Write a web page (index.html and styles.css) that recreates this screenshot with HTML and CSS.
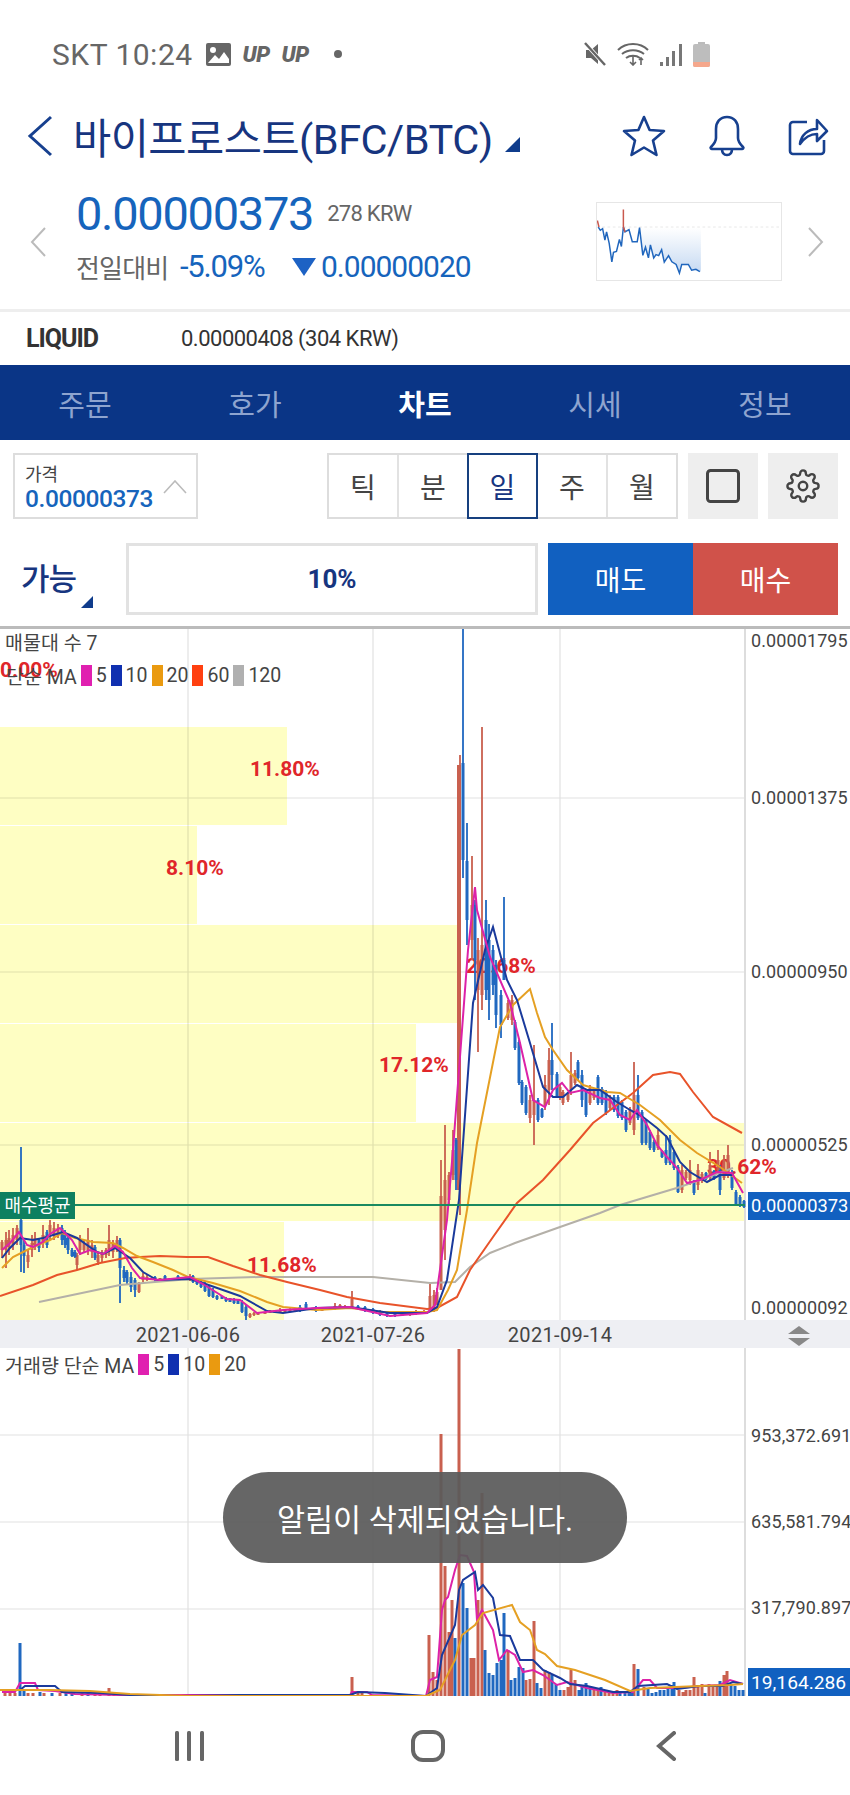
FILE: index.html
```html
<!DOCTYPE html>
<html lang="ko">
    <head>
        <title>바이프로스트 차트</title>
        <meta name="viewport" content="width=device-width, initial-scale=1.0">
        <link rel="stylesheet" href="styles.css">
    </head>
    <body>
        <!-- Status bar -->
        <div class="status">
            <span class="status-text">SKT 10:24</span>
            <svg class="status-img" width="25" height="23" viewBox="0 0 25 23">
                <rect width="25" height="23" rx="2" fill="#666"/>
                <circle cx="7" cy="7" r="3" fill="#fff"/>
                <path d="M2 20l7-8 4 4 5-7 5 7v4H2z" fill="#fff"/>
            </svg>
            <span class="status-up">UP</span>
            <span class="status-up">UP</span>
            <span class="status-dot"></span>
            <div class="status-right">
                <svg width="24" height="24" viewBox="0 0 24 24">
                    <path d="M3 8h5l7-6v20l-7-6H3z" fill="#666"/>
                    <path d="M2 1l20 22" stroke="#fff" stroke-width="4"/>
                    <path d="M2 1l20 22" stroke="#666" stroke-width="2.4"/>
                </svg>
                <svg width="33" height="24" viewBox="0 0 33 24" fill="none" stroke="#666" stroke-width="2">
                    <path d="M1 8c8-8 22-8 30 0"/>
                    <path d="M5 12c6-5 16-5 22 0"/>
                    <path d="M9 16c4-3 10-3 14 0"/>
                    <path d="M16 14v9M13 20l3 3 3-3" stroke-width="1.6"/>
                    <path d="M24 23v-7M22 18l2-2 2 2" stroke-width="1.6"/>
                </svg>
                <svg width="23" height="23" viewBox="0 0 23 23" fill="#777">
                    <rect x="0" y="19" width="3" height="4"/>
                    <rect x="6" y="14" width="3" height="9"/>
                    <rect x="12" y="8" width="3" height="15"/>
                    <rect x="19" y="1" width="3" height="22"/>
                </svg>
                <svg width="17" height="25" viewBox="0 0 17 25">
                    <rect x="5" y="0" width="7" height="3" fill="#bbb"/>
                    <rect x="0" y="2" width="17" height="23" rx="2" fill="#bdbdbd"/>
                    <path d="M0 20h17v3a2 2 0 0 1-2 2H2a2 2 0 0 1-2-2z" fill="#f5a78c"/>
                </svg>
            </div>
        </div>

        <!-- Title -->
        <div class="title-bar">
            <svg class="back-icon" width="26" height="42" viewBox="0 0 26 42">
                <path d="M24 2L3 21l21 19" fill="none" stroke="#17408f" stroke-width="3"/>
            </svg>
            <div class="title">바이프로스트(BFC/BTC)</div>
            <div class="corner-mark title-mark"></div>
            <div class="title-icons">
                <svg width="44" height="42" viewBox="0 0 44 42" fill="none" stroke="#17408f" stroke-width="2.6" stroke-linejoin="round">
                    <path d="M22 2l5.6 13L42 16l-11 9.500L34.500 40 22 32.500 9.500 40 13 25.500 2 16l14.400-1z"/>
                </svg>
                <svg width="40" height="42" viewBox="0 0 38 42" fill="none" stroke="#17408f" stroke-width="2.6" stroke-linejoin="round">
                    <path d="M19 2C12 2 8 7 8 14v9c0 4-2 6-5 9-1 1 0 2 1 2h30c1 0 2-1 1-2-3-3-5-5-5-9v-9c0-7-4-12-11-12z"/>
                    <path d="M14 34c0 4 2 6 5 6s5-2 5-6"/>
                </svg>
                <svg width="41" height="40" viewBox="0 0 41 40" fill="none" stroke="#17408f" stroke-width="2.6" stroke-linejoin="round">
                    <path d="M19 6H5a3 3 0 0 0-3 3v26a3 3 0 0 0 3 3h28a3 3 0 0 0 3-3V24"/>
                    <path d="M12 28c1-9 8-15 17-15V4l10 11-10 10v-7c-7 0-12 3-17 10z"/>
                </svg>
            </div>
        </div>

        <!-- Price summary -->
        <div class="summary">
            <svg class="pager" width="16" height="30" viewBox="0 0 16 30">
                <path d="M15 1L2 15l13 14" fill="none" stroke="#bbb" stroke-width="2"/>
            </svg>
            <div class="summary-main">
                <div class="price-row">
                    <span class="price">0.00000373</span>
                    <span class="price-krw">278 KRW</span>
                </div>
                <div class="change-row">
                    <span class="change-label">전일대비</span>
                    <span class="change-pct">-5.09%</span>
                    <span class="change-arrow"></span>
                    <span class="change-value">0.00000020</span>
                </div>
            </div>
            <svg class="mini-chart" width="186" height="79" viewBox="18 36 558 237" preserveAspectRatio="none">
                <defs>
                    <linearGradient id="mini-fill" x1="0" y1="0" x2="0" y2="1">
                        <stop offset="0" stop-color="#ffffff"/>
                        <stop offset="1" stop-color="#c5d9f2"/>
                    </linearGradient>
                </defs>
                <path d="M150 112L157 197 165 172 174 205 180 165 190 205 197 195 205 198 214 180 222 218 235 198 245 217 258 225 268 252 275 225 295 225 305 243 318 240 333 247V112z" fill="url(#mini-fill)"/>
                <path d="M18 110H576" stroke="#e8e8e8" stroke-width="3" stroke-dasharray="8 8"/>
                <path d="M22 110L28 120 35 115 42 150 47 125 55 160 63 217 68 188 77 185 86 148 92 170 98 110 103 125 115 118 125 155 140 155 147 112 157 197 165 172 174 205 180 165 190 205 197 195 205 198 214 180 222 218 235 198 245 217 258 225 268 252 275 225 295 225 305 243 318 240 330 247" fill="none" stroke="#2066bd" stroke-width="4.500"/>
                <path d="M19 90L24 110M98 56V110L103 125" fill="none" stroke="#c9584e" stroke-width="4.500"/>
            </svg>
            <svg class="pager" width="16" height="30" viewBox="0 0 16 30">
                <path d="M1 1l13 14L1 29" fill="none" stroke="#bbb" stroke-width="2"/>
            </svg>
        </div>

        <div class="market">
            <div class="market-name">LIQUID</div>
            <div class="market-value">0.00000408 (304 KRW)</div>
        </div>

        <!-- Tabs -->
        <div class="tabs">
            <div class="tab">주문</div>
            <div class="tab">호가</div>
            <div class="tab active">차트</div>
            <div class="tab">시세</div>
            <div class="tab">정보</div>
        </div>

        <!-- Chart controls -->
        <div class="toolbar">
            <div class="price-box">
                <div class="price-box-label">가격</div>
                <div class="price-box-value">0.00000373</div>
                <svg class="price-box-caret" width="24" height="14" viewBox="0 0 24 14">
                    <path d="M1 13L12 1l11 12" fill="none" stroke="#bbb" stroke-width="1.600"/>
                </svg>
            </div>
            <div class="periods">
                <div class="period">틱</div>
                <div class="period">분</div>
                <div class="period selected">일</div>
                <div class="period">주</div>
                <div class="period">월</div>
            </div>
            <div class="tool-btn">
                <svg width="34" height="34" viewBox="0 0 34 34">
                    <rect x="1.500" y="1.500" width="31" height="31" rx="3" fill="none" stroke="#444" stroke-width="3"/>
                </svg>
            </div>
            <div class="tool-btn">
                <svg width="34" height="34" viewBox="0 0 24 24" fill="none" stroke="#444" stroke-width="1.700">
                    <circle cx="12" cy="12" r="3"/>
                    <path d="M19.400 15a1.650 1.650 0 0 0 .33 1.820l.06.06a2 2 0 0 1 0 2.830 2 2 0 0 1-2.830 0l-.06-.06a1.650 1.650 0 0 0-1.820-.33 1.650 1.650 0 0 0-1 1.510V21a2 2 0 0 1-2 2 2 2 0 0 1-2-2v-.09A1.650 1.650 0 0 0 9 19.400a1.650 1.650 0 0 0-1.820.33l-.06.06a2 2 0 0 1-2.830 0 2 2 0 0 1 0-2.830l.06-.06a1.650 1.650 0 0 0 .33-1.820 1.650 1.650 0 0 0-1.510-1H3a2 2 0 0 1-2-2 2 2 0 0 1 2-2h.09A1.650 1.650 0 0 0 4.600 9a1.650 1.650 0 0 0-.33-1.820l-.06-.06a2 2 0 0 1 0-2.830 2 2 0 0 1 2.830 0l.06.06a1.650 1.650 0 0 0 1.820.33H9a1.650 1.650 0 0 0 1-1.510V3a2 2 0 0 1 2-2 2 2 0 0 1 2 2v.09a1.650 1.650 0 0 0 1 1.510 1.650 1.650 0 0 0 1.820-.33l.06-.06a2 2 0 0 1 2.830 0 2 2 0 0 1 0 2.830l-.06.06a1.650 1.650 0 0 0-.33 1.820V9a1.650 1.650 0 0 0 1.510 1H21a2 2 0 0 1 2 2 2 2 0 0 1-2 2h-.09a1.650 1.650 0 0 0-1.510 1z"/>
                </svg>
            </div>
        </div>

        <div class="order-row">
            <div class="order-type">
                <span>가능</span>
                <div class="corner-mark order-mark"></div>
            </div>
            <div class="order-pct">10%</div>
            <div class="order-buttons">
                <div class="order-btn sell">매도</div>
                <div class="order-btn buy">매수</div>
            </div>
        </div>

        <!-- Price chart -->
        <div class="chart price-chart">
            <svg class="chart-svg" width="850" height="722" viewBox="0 626 850 722">
                <g fill="#fefec3">
                    <rect x="0" y="727" width="287" height="98"/>
                    <rect x="0" y="826" width="197" height="98"/>
                    <rect x="0" y="925" width="461" height="98"/>
                    <rect x="0" y="1024" width="416" height="98"/>
                    <rect x="0" y="1123" width="745" height="98"/>
                    <rect x="0" y="1222" width="284" height="98"/>
                </g>
                <path class="grid" d="M188 626V1320M373 626V1320M560 626V1320M0 798H745M0 972H745M0 1145H745"/>
                <path class="axis-line" d="M745 626V1320"/>

                <g class="vp-label">
                    <text x="0" y="677">0.00%</text>
                    <text x="250" y="776">11.80%</text>
                    <text x="166" y="875">8.10%</text>
                    <text x="466" y="973">20.68%</text>
                    <text x="379" y="1072">17.12%</text>
                    <text x="707" y="1174">30.62%</text>
                    <text x="247" y="1272">11.68%</text>
                </g>

                <!-- candles: wicks then bodies -->
                <path class="wick up" d="M2 1240V1258M6 1232V1268M9 1230V1255M13 1228V1250M17 1225V1245M28 1250V1268M32 1235V1257M35 1232V1250M43 1225V1248M50 1220V1240M54 1222V1240M58 1224V1238M77 1253V1270M80 1235V1255M84 1240V1252M88 1228V1255M92 1240V1258M98 1252V1265M102 1250V1262M106 1248V1258M109 1225V1256M113 1240V1258M117 1236V1252M139 1282V1293M143 1273V1282M147 1275V1281M190 1274V1281M250 1313V1318M254 1312V1316M270 1310V1313M280 1308V1313M290 1308V1312M335 1303V1310M340 1304V1308M345 1305V1308M352 1291V1307M410 1311V1316M416 1310V1315M424 1310V1314M430 1284V1312M434 1290V1312M437 1288V1305M441 1160V1290M445 1125V1260M449 1172V1205M453 1130V1180M460 755V1215M472 856V960M478 938V1052M482 727V1010M508 1000V1020M512 995V1025M530 1095V1123M534 1045V1145M545 1075V1110M549 1048V1105M560 1085V1100M563 1090V1105M568 1092V1102M571 1052V1095M575 1070V1085M590 1085V1105M594 1088V1100M610 1095V1110M630 1107V1125M634 1062V1135M658 1130V1150M682 1165V1193M686 1170V1180M690 1160V1185M698 1164V1190M702 1172V1183M710 1152V1180M718 1150V1172M724 1155V1180M728 1145V1178"/>
                <path class="wick down" d="M21 1147V1272M24 1240V1273M39 1238V1252M47 1230V1248M62 1225V1245M65 1230V1248M68 1236V1254M72 1248V1257M75 1250V1258M95 1245V1260M120 1238V1303M124 1266V1282M127 1270V1285M131 1272V1292M135 1278V1297M155 1276V1282M165 1275V1281M178 1275V1281M193 1275V1283M197 1278V1285M201 1280V1288M205 1282V1292M209 1285V1297M213 1288V1298M217 1295V1300M226 1297V1302M234 1298V1304M242 1300V1313M246 1305V1321M300 1305V1312M306 1302V1310M316 1306V1312M358 1305V1309M365 1306V1312M373 1308V1314M380 1310V1316M387 1312V1317M395 1313V1317M456 1138V1190M463 626V878M467 823V945M475 900V1000M486 900V1000M489 924V1020M493 945V995M496 960V1028M501 990V1038M504 897V980M515 1020V1050M519 1040V1085M522 1080V1105M526 1085V1115M538 1098V1122M542 1108V1118M552 1023V1090M557 1072V1098M578 1060V1080M582 1070V1107M586 1090V1117M598 1075V1105M602 1087V1105M606 1090V1115M614 1095V1112M618 1095V1118M622 1100V1120M626 1110V1132M638 1075V1120M642 1110V1145M646 1120V1145M650 1130V1150M654 1140V1152M662 1150V1158M666 1135V1165M670 1135V1165M674 1150V1170M678 1165V1193M694 1180V1195M706 1172V1180M714 1170V1180M720 1165V1195M732 1170V1190M736 1190V1205M740 1195V1207M744 1200V1208"/>
                <path class="body up" d="M2 1242V1250M6 1240V1250M9 1238V1247M13 1235V1245M17 1228V1240M28 1255V1262M32 1243V1250M35 1238V1245M43 1235V1242M50 1225V1232M54 1228V1236M58 1228V1235M77 1255V1265M80 1240V1250M84 1243V1250M88 1240V1250M92 1245V1252M98 1255V1262M102 1253V1258M106 1250V1255M109 1240V1250M113 1243V1252M117 1240V1248M139 1284V1292M143 1276V1280M147 1277V1280M151 1278V1280M160 1278V1280M170 1278V1280M183 1277V1279M190 1276V1279M250 1314V1317M254 1313V1315M258 1313V1315M265 1312V1314M270 1311V1313M275 1310V1313M280 1310V1312M285 1310V1312M290 1309V1312M295 1309V1311M322 1309V1311M330 1308V1310M335 1306V1309M340 1305V1308M345 1306V1308M352 1299V1307M402 1314V1316M410 1312V1315M416 1311V1314M424 1311V1313M430 1296V1310M434 1295V1310M437 1292V1304M441 1196V1290M445 1180V1230M449 1175V1200M453 1150V1175M472 905V940M478 950V990M482 945V995M508 1003V1018M512 1000V1020M530 1100V1118M534 1100V1115M545 1085V1105M549 1060V1090M560 1087V1098M563 1092V1103M568 1094V1100M571 1075V1090M575 1073V1083M590 1088V1103M594 1090V1098M610 1097V1108M630 1110V1123M634 1095V1130M658 1135V1148M682 1170V1190M686 1172V1178M690 1170V1180M698 1170V1185M702 1174V1181M710 1165V1178M718 1160V1170M724 1160V1178M728 1155V1176"/>
                <path class="body thick up" d="M459 765V1190"/>
                <path class="body down" d="M21 1220V1245M24 1245V1256M39 1240V1248M47 1232V1245M62 1228V1240M65 1233V1245M68 1238V1250M72 1250V1256M75 1252V1257M95 1247V1258M120 1240V1268M124 1270V1278M127 1272V1282M131 1277V1287M135 1280V1290M155 1277V1280M165 1276V1279M178 1276V1279M193 1276V1282M197 1280V1284M201 1282V1287M205 1284V1291M209 1287V1296M213 1290V1297M217 1296V1299M222 1296V1299M226 1298V1301M230 1298V1302M234 1299V1303M238 1299V1304M242 1302V1312M246 1307V1316M300 1307V1311M306 1304V1308M316 1307V1311M358 1306V1308M365 1307V1311M373 1309V1313M380 1311V1315M387 1313V1316M395 1314V1316M456 1140V1180M463 763V860M467 861V920M475 905V960M486 920V990M489 940V1000M493 950V985M496 965V1015M501 995V1025M504 960V980M515 1022V1048M519 1042V1083M522 1082V1103M526 1087V1113M538 1100V1120M542 1109V1117M552 1060V1075M557 1074V1096M578 1062V1078M582 1075V1100M586 1092V1115M598 1077V1103M602 1089V1103M606 1092V1113M614 1097V1110M618 1097V1116M622 1102V1118M626 1112V1130M638 1095V1118M642 1112V1143M646 1122V1143M650 1132V1148M654 1142V1150M662 1151V1157M666 1150V1163M670 1140V1163M674 1152V1168M678 1167V1192M694 1182V1193M706 1173V1179M714 1171V1179M720 1170V1190M732 1172V1188M736 1192V1204M740 1197V1206M744 1201V1207"/>

                <!-- moving averages -->
                <polyline class="ma ma120" points="39,1302 120,1285 190,1279 260,1277 373,1277 430,1283 455,1282 470,1267 490,1253 515,1243 560,1227 600,1213 620,1205 680,1187 733,1168"/>
                <polyline class="ma ma60" points="0,1296 33,1285 57,1275 77,1270 100,1263 125,1258 140,1257 160,1256 187,1257 208,1257 233,1266 260,1275 287,1282 320,1290 347,1297 380,1303 427,1309 437,1308 457,1297 470,1270 493,1237 517,1203 543,1180 570,1150 593,1123 633,1093 653,1075 670,1072 680,1074 693,1092 713,1117 742,1133"/>
                <polyline class="ma ma20" points="2,1268 13,1257 33,1247 50,1240 62,1233 75,1238 93,1242 113,1243 123,1248 137,1256 153,1262 173,1270 188,1277 213,1283 240,1291 267,1302 283,1307 317,1310 350,1308 383,1312 427,1312 437,1310 448,1290 457,1270 467,1210 477,1143 500,1027 513,1005 530,989 537,1013 545,1037 553,1050 567,1070 583,1085 607,1092 620,1093 640,1105 660,1120 680,1140 697,1153 720,1167 742,1183"/>
                <polyline class="ma ma10" points="2,1258 10,1248 20,1238 33,1240 43,1238 63,1232 77,1238 97,1252 103,1254 115,1248 130,1258 143,1272 157,1280 190,1279 200,1282 240,1296 267,1311 283,1313 317,1308 350,1307 390,1313 427,1313 437,1307 447,1280 459,1200 473,1003 485,950 493,927 507,980 517,1000 530,1043 543,1087 553,1097 563,1097 577,1085 587,1090 600,1090 610,1097 617,1102 630,1110 643,1117 657,1128 667,1137 680,1162 690,1172 707,1182 720,1175 733,1175"/>
                <polyline class="ma ma5" points="2,1250 10,1243 19,1232 27,1245 33,1247 43,1242 50,1234 60,1228 72,1240 80,1254 90,1250 103,1254 115,1246 123,1252 132,1268 140,1278 160,1280 190,1277 203,1284 227,1299 240,1300 257,1313 283,1310 317,1308 350,1307 390,1316 427,1313 435,1305 447,1220 453,1150 468,950 475,887 477,910 490,957 510,1003 520,1043 533,1100 545,1107 553,1090 562,1083 570,1093 583,1090 600,1098 610,1100 620,1115 630,1120 637,1110 647,1125 657,1145 667,1157 677,1168 687,1183 700,1180 717,1172 732,1173 743,1193"/>

                <path class="avg-line" d="M0 1205H745"/>
                <rect class="avg-badge" x="0" y="1192" width="75" height="27"/>
                <text class="avg-text" x="37.500" y="1212">매수평균</text>

                <g class="axis-text">
                    <text x="751" y="647">0.00001795</text>
                    <text x="751" y="804">0.00001375</text>
                    <text x="751" y="978">0.00000950</text>
                    <text x="751" y="1151">0.00000525</text>
                    <text x="751" y="1314">0.00000092</text>
                </g>
                <rect class="last-box" x="748" y="1192" width="102" height="28"/>
                <text class="last-text" x="751" y="1212">0.00000373</text>

                <!-- date strip -->
                <rect class="date-strip" x="0" y="1320" width="850" height="28"/>
                <g class="date-text">
                    <text x="188" y="1342">2021-06-06</text>
                    <text x="373" y="1342">2021-07-26</text>
                    <text x="560" y="1342">2021-09-14</text>
                </g>
                <path class="resizer" d="M799 1326l11 8h-22zM788 1338h22l-11 8z"/>
            </svg>
            <div class="legend-name price-legend-name">매물대 수 7</div>
            <div class="legend price-legend">
                <span>단순 MA</span>
                <i class="swatch c5"></i><span>5</span>
                <i class="swatch c10"></i><span>10</span>
                <i class="swatch c20"></i><span>20</span>
                <i class="swatch c60"></i><span>60</span>
                <i class="swatch c120"></i><span>120</span>
            </div>
        </div>

        <!-- Volume chart -->
        <div class="chart volume-chart">
            <svg class="chart-svg" width="850" height="348" viewBox="0 1348 850 348">
                <path class="grid" d="M188 1348V1696M373 1348V1696M560 1348V1696M0 1435H745M0 1522H745M0 1609H745"/>
                <path class="axis-line" d="M745 1348V1696"/>
                <path class="bar up" d="M5 1696V1693M10 1696V1693M15 1696V1693M28 1696V1693M33 1696V1693M44 1696V1693M60 1696V1693M82 1696V1693M95 1696V1693M100 1696V1693M109 1696V1688M114 1696V1692M352 1696V1677M358 1696V1693M362 1696V1693M429 1696V1635M433 1696V1672M437 1696V1680M441 1696V1434M445 1696V1566M449 1696V1632M452 1696V1600M459 1696V1349M471 1696V1658M474 1696V1658M478 1696V1600M482 1696V1493M508 1696V1650M526 1696V1680M530 1696V1679M534 1696V1621M545 1696V1670M549 1696V1672M564 1696V1690M568 1696V1687M571 1696V1670M575 1696V1680M594 1696V1688M598 1696V1690M605 1696V1692M609 1696V1692M613 1696V1692M617 1696V1690M634 1696V1664M644 1696V1687M679 1696V1690M683 1696V1692M686 1696V1690M690 1696V1690M694 1696V1677M698 1696V1685M702 1696V1684M709 1696V1684M713 1696V1686M717 1696V1686M724 1696V1675M727 1696V1671"/>
                <path class="bar down" d="M20 1696V1643M24 1696V1690M40 1696V1692M52 1696V1693M66 1696V1693M72 1696V1693M88 1696V1693M455 1696V1638M463 1696V1583M467 1696V1608M485 1696V1650M489 1696V1673M493 1696V1675M497 1696V1663M501 1696V1660M504 1696V1613M511 1696V1680M515 1696V1678M519 1696V1667M523 1696V1668M537 1696V1683M541 1696V1688M552 1696V1675M556 1696V1684M560 1696V1690M579 1696V1690M582 1696V1687M586 1696V1683M590 1696V1687M601 1696V1687M620 1696V1692M625 1696V1692M629 1696V1692M632 1696V1693M638 1696V1669M648 1696V1688M652 1696V1693M656 1696V1692M660 1696V1690M664 1696V1690M668 1696V1688M672 1696V1685M674 1696V1682M705 1696V1693M720 1696V1681M731 1696V1685M735 1696V1686M739 1696V1690M743 1696V1690"/>
                <polyline class="ma ma5" points="2,1692 15,1692 20,1683 35,1683 38,1690 55,1691 75,1694 120,1695 350,1695 352,1692 367,1692 372,1695 426,1696 430,1680 437,1677 442,1610 445,1600 448,1597 455,1570 460,1555 467,1556 474,1572 477,1620 482,1610 493,1630 499,1660 507,1650 515,1655 523,1672 533,1670 543,1675 557,1685 567,1682 587,1688 613,1693 633,1692 643,1680 650,1680 657,1688 680,1688 700,1686 720,1685 730,1680 743,1684"/>
                <polyline class="ma ma10" points="20,1690 25,1686 55,1686 62,1692 100,1693 130,1695 180,1696 240,1695 350,1695 358,1692 385,1693 426,1696 437,1688 442,1655 455,1625 459,1590 463,1580 475,1572 478,1590 483,1585 493,1598 500,1635 510,1636 520,1660 533,1660 543,1670 560,1678 570,1684 587,1686 613,1692 630,1692 638,1686 667,1684 677,1689 700,1686 723,1686 733,1682 743,1684"/>
                <polyline class="ma ma20" points="0,1690 15,1690 50,1690 90,1691 130,1694 190,1696 426,1696 440,1690 455,1660 462,1635 475,1625 483,1613 512,1605 520,1622 530,1630 537,1650 545,1654 557,1666 575,1670 605,1680 630,1691 650,1688 700,1686 730,1685 743,1684"/>
                <g class="axis-text">
                    <text x="751" y="1442">953,372.691</text>
                    <text x="751" y="1528">635,581.794</text>
                    <text x="751" y="1614">317,790.897</text>
                </g>
                <rect class="last-box" x="748" y="1668" width="102" height="28"/>
                <text class="last-text volume-last" x="751" y="1689">19,164.286</text>
            </svg>
            <div class="legend volume-legend">
                <span>거래량 단순 MA</span>
                <i class="swatch c5"></i><span>5</span>
                <i class="swatch c10"></i><span>10</span>
                <i class="swatch c20"></i><span>20</span>
            </div>
            <div class="toast">알림이 삭제되었습니다.</div>
        </div>

        <!-- Android navigation -->
        <div class="nav">
            <div class="nav-item">
                <svg width="30" height="30" viewBox="0 0 30 30" fill="#666">
                    <rect x="0" y="0" width="4" height="30" rx="1.500"/>
                    <rect x="12" y="0" width="4" height="30" rx="1.500"/>
                    <rect x="25" y="0" width="4" height="30" rx="1.500"/>
                </svg>
            </div>
            <div class="nav-item">
                <svg width="34" height="32" viewBox="0 0 34 32">
                    <rect x="2" y="2" width="30" height="28" rx="10" fill="none" stroke="#666" stroke-width="4"/>
                </svg>
            </div>
            <div class="nav-item">
                <svg width="20" height="30" viewBox="0 0 20 30">
                    <path d="M18 2L3 15l15 13" fill="none" stroke="#666" stroke-width="4" stroke-linecap="round"/>
                </svg>
            </div>
        </div>
    </body>
</html>
```

FILE: styles.css
```css
* {
    box-sizing: border-box;
    font-family: Roboto, 'Noto Sans CJK KR', sans-serif;
}

body {
    margin: 0;
    width: 850px;
    height: 1795px;
    overflow: hidden;
    background-color: white;
}

/* status bar */
.status {
    height: 108px;
    padding: 0 140px 0 52px;
    display: flex;
    align-items: center;
    color: #666;
}
.status-text {
    font-size: 30px;
    letter-spacing: 0.5px;
    margin-right: 13px;
}
.status-img {
    margin-right: 3px;
}
.status-up {
    width: 30px;
    margin-left: 9px;
    font-size: 22px;
    font-weight: 900;
    font-style: italic;
    letter-spacing: -0.5px;
}
.status-dot {
    width: 8px;
    height: 8px;
    margin-left: 22px;
    border-radius: 50%;
    background-color: #666;
}
.status-right {
    margin-left: auto;
    display: flex;
    align-items: center;
    gap: 10px;
}

/* title */
.title-bar {
    height: 56px;
    padding: 0 21px 0 27px;
    display: flex;
    align-items: center;
}
.title {
    margin-left: 20px;
    font-size: 41.5px;
    letter-spacing: -0.5px;
    color: #17357f;
    white-space: nowrap;
}
.corner-mark {
    width: 0;
    height: 0;
    border-style: solid;
    border-width: 0 0 15px 15px;
    border-color: transparent transparent #0f3c8c transparent;
}
.title-mark {
    margin: 16px 0 0 12px;
}
.title-icons {
    margin-left: auto;
    display: flex;
    gap: 41px;
    align-items: center;
}

/* price summary */
.summary {
    height: 148px;
    padding: 10px 26px 0 30px;
    display: flex;
    align-items: center;
    border-bottom: 3px solid #eee;
}
.summary-main {
    margin-left: 30px;
}
.price-row {
    height: 50px;
    display: flex;
    align-items: center;
    white-space: nowrap;
}
.price {
    font-size: 47px;
    letter-spacing: -1.3px;
    color: #1664bc;
}
.price-krw {
    margin-left: 14px;
    font-size: 22px;
    letter-spacing: -0.7px;
    color: #666;
}
.change-row {
    height: 56px;
    display: flex;
    align-items: center;
    white-space: nowrap;
}
.change-label {
    width: 104px;
    font-size: 26px;
    letter-spacing: -0.8px;
    color: #666;
}
.change-pct {
    width: 112px;
    font-size: 31px;
    letter-spacing: -1.2px;
    color: #1664bc;
}
.change-arrow {
    width: 0;
    height: 0;
    margin-right: 5px;
    border-style: solid;
    border-width: 18px 12px 0 12px;
    border-color: #1d62c4 transparent transparent transparent;
}
.change-value {
    font-size: 30px;
    letter-spacing: -1px;
    color: #1664bc;
}
.mini-chart {
    margin-left: auto;
    margin-right: 26px;
    border: 1px solid #e6e6e6;
}

.market {
    height: 53px;
    padding-left: 26px;
    display: flex;
    align-items: center;
    color: #333;
    white-space: nowrap;
}
.market-name {
    width: 155px;
    font-size: 25px;
    font-weight: 700;
    letter-spacing: -1px;
}
.market-value {
    font-size: 22px;
    letter-spacing: -0.5px;
}

/* tabs */
.tabs {
    height: 75px;
    display: flex;
    background-color: #0a3586;
}
.tab {
    flex: 1;
    display: flex;
    align-items: center;
    justify-content: center;
    font-size: 29px;
    color: #8ea4cf;
}
.tab.active {
    color: white;
    font-weight: 700;
}

/* chart controls */
.toolbar {
    margin-top: 13px;
    height: 66px;
    padding: 0 12px 0 13px;
    display: flex;
    gap: 10px;
}
.price-box {
    position: relative;
    width: 185px;
    padding: 9px 0 0 10px;
    border: 2px solid #ddd;
}
.price-box-label {
    font-size: 18px;
    line-height: 22px;
    color: #444;
}
.price-box-value {
    font-size: 24.5px;
    font-weight: 500;
    line-height: 26px;
    letter-spacing: -0.4px;
    color: #1664bc;
}
.price-box-caret {
    position: absolute;
    top: 25px;
    right: 9px;
}
.periods {
    width: 351px;
    margin-left: auto;
    display: flex;
    border: 2px solid #ddd;
}
.period {
    flex: 1;
    display: flex;
    align-items: center;
    justify-content: center;
    font-size: 28px;
    color: #444;
    border-left: 2px solid #e2e2e2;
}
.period:first-child {
    border-left: none;
}
.period.selected {
    margin: -2px 0;
    flex: 0 0 71px;
    color: #17357f;
    border: 2px solid #17407f;
}
.period.selected + .period {
    border-left: none;
}
.tool-btn {
    width: 70px;
    display: flex;
    align-items: center;
    justify-content: center;
    background-color: #eee;
}

.order-row {
    margin-top: 24px;
    height: 72px;
    padding-right: 12px;
    display: flex;
}
.order-type {
    position: relative;
    width: 126px;
    padding: 11px 0 0 21px;
    font-size: 31px;
    font-weight: 500;
    letter-spacing: -1px;
    color: #17357f;
}
.order-mark {
    position: absolute;
    left: 81px;
    bottom: 7px;
    border-width: 0 0 12px 12px;
}
.order-pct {
    width: 412px;
    display: flex;
    align-items: center;
    justify-content: center;
    border: 3px solid #e2e2e2;
    font-size: 26px;
    font-weight: 700;
    color: #17357f;
}
.order-buttons {
    flex: 1;
    margin-left: 10px;
    display: flex;
}
.order-btn {
    flex: 1;
    display: flex;
    align-items: center;
    justify-content: center;
    font-size: 28px;
    color: white;
}
.sell {
    background-color: #1160c0;
}
.buy {
    background-color: #d0524a;
}

/* charts */
.chart {
    position: relative;
}
.price-chart {
    margin-top: 11px;
    height: 722px;
}
.volume-chart {
    height: 348px;
}
.chart-svg {
    display: block;
}
.price-chart::before {
    content: "";
    position: absolute;
    top: 0;
    left: 0;
    right: 0;
    height: 3px;
    background-color: #bbb;
}
.grid {
    fill: none;
    stroke: #000;
    stroke-opacity: 0.12;
    stroke-width: 1.2;
}
.axis-line {
    fill: none;
    stroke: #ddd;
    stroke-width: 2;
}
.vp-label text {
    font-size: 21px;
    font-weight: 700;
    fill: #e0262a;
}
.wick,
.body,
.bar {
    fill: none;
}
.wick {
    stroke-width: 1.8;
}
.body {
    stroke-width: 3;
}
.body.thick {
    stroke-width: 4;
}
.bar {
    stroke-width: 3;
}
.up {
    stroke: #c9604f;
}
.down {
    stroke: #2068c0;
}
.ma {
    fill: none;
    stroke-width: 2;
}
.ma5 {
    stroke: #dd22a8;
}
.ma10 {
    stroke: #1a3a9c;
}
.ma20 {
    stroke: #e5a023;
}
.ma60 {
    stroke: #e8532a;
}
.ma120 {
    stroke: #b4b0a8;
}
.avg-line {
    fill: none;
    stroke: #1a8a60;
    stroke-width: 2;
}
.avg-badge {
    fill: #0e8060;
}
.avg-text {
    font-size: 18px;
    fill: white;
    text-anchor: middle;
}
.axis-text text {
    font-size: 18px;
    letter-spacing: 0.1px;
    fill: #444;
}
.last-box {
    fill: #1160c0;
}
.last-text {
    font-size: 18.3px;
    fill: white;
}
.volume-last {
    font-size: 19.2px;
}
.date-strip {
    fill: #eeeff3;
}
.date-text text {
    font-size: 20px;
    letter-spacing: 0.35px;
    fill: #444;
    text-anchor: middle;
}
.resizer {
    fill: #888;
}

.legend-name,
.legend {
    position: absolute;
    font-size: 19.5px;
    color: #444;
    white-space: nowrap;
}
.price-legend-name {
    top: 1px;
    left: 5px;
}
.legend {
    display: flex;
    align-items: center;
}
.price-legend {
    top: 35px;
    left: 6px;
}
.volume-legend {
    top: 2px;
    left: 5px;
}
.swatch {
    width: 11px;
    height: 21px;
    margin: 0 4px;
}
.c5 {
    background-color: #e020b0;
}
.c10 {
    background-color: #1030b0;
}
.c20 {
    background-color: #ea9a10;
}
.c60 {
    background-color: #ff4010;
}
.c120 {
    background-color: #b0b0b0;
}

/* toast sits over the volume chart */
.toast {
    position: absolute;
    top: 124px;
    left: 223px;
    width: 404px;
    height: 91px;
    display: flex;
    align-items: center;
    justify-content: center;
    border-radius: 46px;
    background-color: rgba(90, 90, 90, 0.93);
    font-size: 30.5px;
    color: white;
}

/* navigation */
.nav {
    height: 99px;
    padding-left: 5px;
    display: flex;
    justify-content: center;
    align-items: center;
}
.nav-item {
    width: 238px;
    display: flex;
    justify-content: center;
}
```
